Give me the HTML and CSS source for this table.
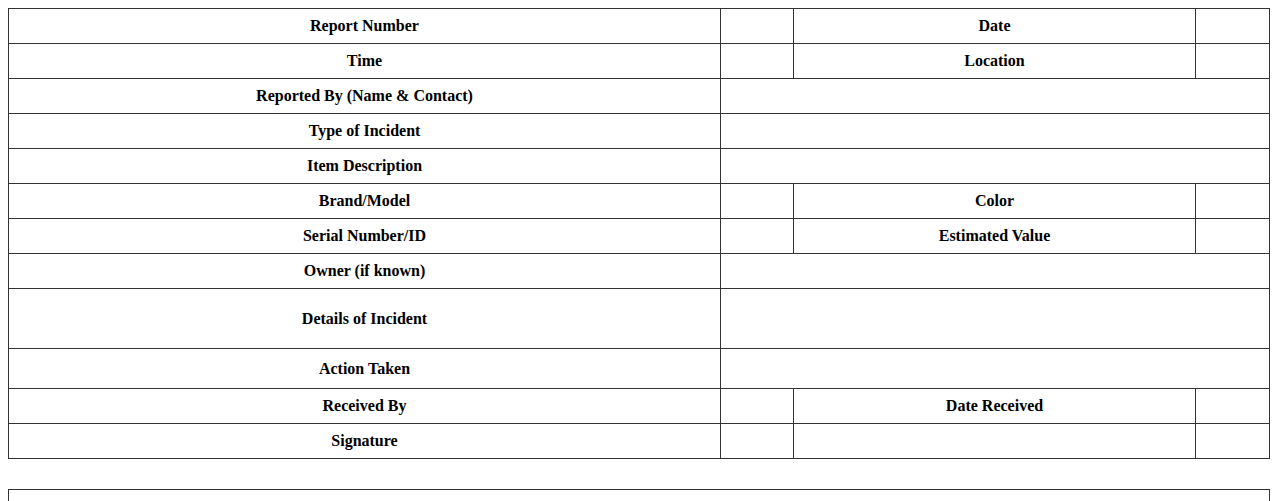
FILE: index.html
```html
<!DOCTYPE html>
<html>
<head>
<meta charset="utf-8">
<link rel="stylesheet" href="styles.css">
</head>
<body>
<table class="form">
  <colgroup>
    <col class="c-label">
    <col class="c-val">
    <col class="c-label2">
    <col class="c-last">
  </colgroup>
  <tr><th>Report Number</th><td></td><th>Date</th><td></td></tr>
  <tr><th>Time</th><td></td><th>Location</th><td></td></tr>
  <tr><th>Reported By (Name &amp; Contact)</th><td colspan="3"></td></tr>
  <tr><th>Type of Incident</th><td colspan="3"></td></tr>
  <tr><th>Item Description</th><td colspan="3"></td></tr>
  <tr><th>Brand/Model</th><td></td><th>Color</th><td></td></tr>
  <tr><th>Serial Number/ID</th><td></td><th>Estimated Value</th><td></td></tr>
  <tr><th>Owner (if known)</th><td colspan="3"></td></tr>
  <tr class="tall"><th>Details of Incident</th><td colspan="3"></td></tr>
  <tr class="mid"><th>Action Taken</th><td colspan="3"></td></tr>
  <tr><th>Received By</th><td></td><th>Date Received</th><td></td></tr>
  <tr><th>Signature</th><td></td><td></td><td></td></tr>
</table>
<table class="form notes">
  <tr><td></td></tr>
</table>
</body>
</html>
```
FILE: styles.css
```css
html, body {
  margin: 0;
  padding: 0;
  background: #fff;
}
body {
  margin: 8px;
  font-family: "Liberation Serif", "Times New Roman", serif;
  font-size: 16px;
  color: #000;
}
.form {
  width: 100%;
  border-collapse: collapse;
  table-layout: fixed;
  margin-bottom: 30px;
}
.c-label { width: 712px; }
.c-val { width: 73px; }
.c-label2 { width: 402px; }
.form th,
.form td {
  border: 1px solid #333;
  padding: 8px;
  height: 18px;
  text-align: center;
  font-weight: bold;
}
.form tr.tall th,
.form tr.tall td {
  height: 43px;
}
.form tr.mid th,
.form tr.mid td {
  height: 23px;
}
```
